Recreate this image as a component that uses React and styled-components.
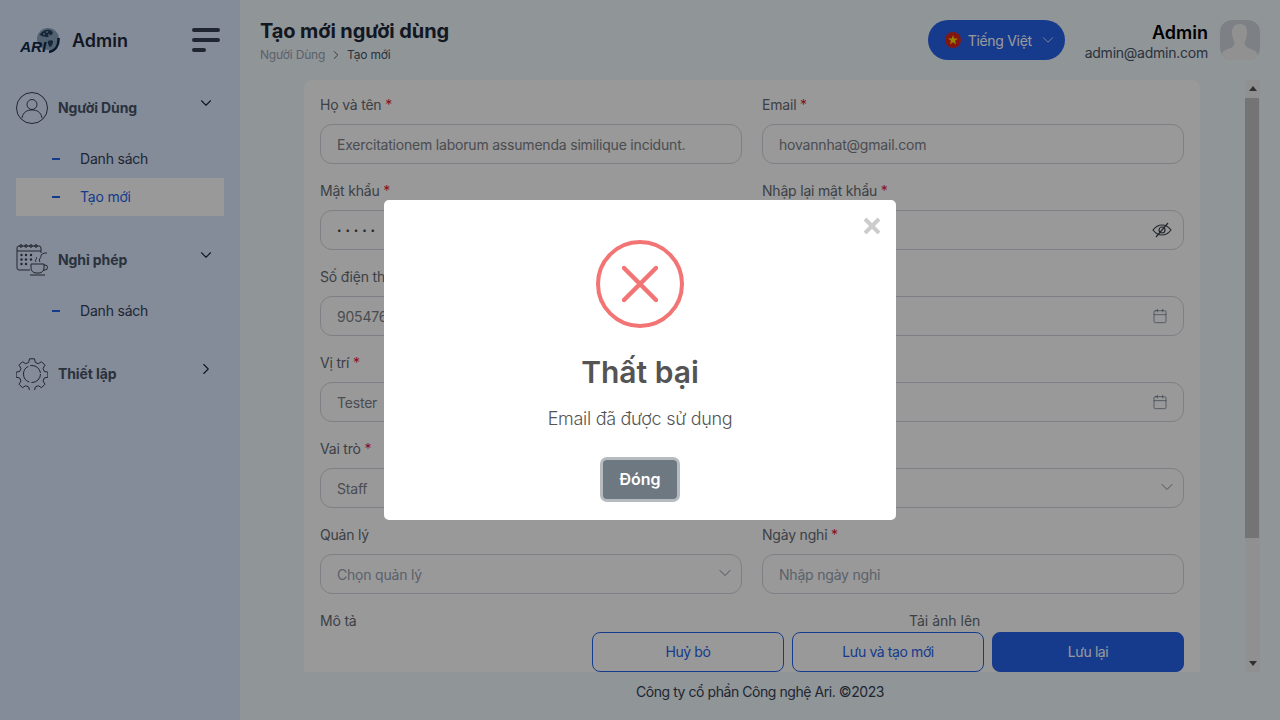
import { ChevronDown, ChevronRight, Calendar } from "lucide-react";
import styled, { createGlobalStyle } from "styled-components";

const rows = [
  [
    { label: "Họ và tên", required: true, value: "Exercitationem laborum assumenda similique incidunt." },
    { label: "Email", required: true, value: "hovannhat@gmail.com" },
  ],
  [
    { label: "Mật khẩu", required: true, value: "12345", type: "password" },
    { label: "Nhập lại mật khẩu", required: true, value: "12345", type: "password", icon: "eye" },
  ],
  [
    { label: "Số điện thoại", required: true, value: "905476123" },
    { label: "Ngày sinh", required: true, placeholder: "Chọn ngày", icon: "date" },
  ],
  [
    { label: "Vị trí", required: true, value: "Tester" },
    { label: "Ngày vào làm", required: true, placeholder: "Chọn ngày", icon: "date" },
  ],
  [
    { label: "Vai trò", required: true, value: "Staff" },
    { label: "Phòng ban", required: true, placeholder: "Chọn", icon: "select" },
  ],
  [
    { label: "Quản lý", placeholder: "Chọn quản lý", icon: "select" },
    { label: "Ngày nghỉ", required: true, placeholder: "Nhập ngày nghỉ" },
  ],
];

function Logo() {
  return (
    <svg width="40" height="28" viewBox="0 0 40 28">
      <circle cx="28" cy="13" r="11" fill="#8ba3bb" />
      <path d="M20 8c3-4 7-5 10-4s4 4 1 5-3 3-5 2-3 0-4-1-3 0-2-2z" fill="#24425f" />
      <path d="M28 15c3-1 5-1 5 1s-2 5-3 5-3-5-2-6z" fill="#24425f" />
      <g fill="#c4d4e0">
        <circle cx="24" cy="8" r="0.800" />
        <circle cx="27" cy="6" r="0.800" />
        <circle cx="29" cy="9" r="0.800" />
      </g>
      <path d="M29 26c6-1 10-6 9.500-14" fill="none" stroke="#10284a" strokeWidth="2.500" />
      <text x="0" y="26" fontFamily="Liberation Sans, sans-serif" fontSize="14" fontWeight="700" fontStyle="italic" fill="#10284a" textLength="26" lengthAdjust="spacingAndGlyphs">
        ARI
      </text>
    </svg>
  );
}

function UserIcon() {
  return (
    <svg width="32" height="32" viewBox="0 0 32 32" fill="none" stroke="#3a404c" strokeWidth="1">
      <circle cx="16" cy="16" r="15.500" />
      <circle cx="16" cy="12.500" r="5" />
      <path d="M6 26c1-6 5-8 10-8s9 2 10 8" />
    </svg>
  );
}

function LeaveIcon() {
  return (
    <svg width="32" height="32" viewBox="0 0 32 32" fill="none" stroke="#3a404c" strokeWidth="1">
      <path d="M14 26H3a2 2 0 0 1-2-2V4a2 2 0 0 1 2-2h20a2 2 0 0 1 2 2v5" />
      <path d="M1 7h24" />
      <circle cx="5" cy="2" r="1.300" />
      <circle cx="10" cy="2" r="1.300" />
      <circle cx="15" cy="2" r="1.300" />
      <circle cx="20" cy="2" r="1.300" />
      <g fill="#3a404c" stroke="none">
        <circle cx="5.500" cy="11" r="1.200" />
        <circle cx="10" cy="11" r="1.200" />
        <circle cx="15" cy="11" r="1.200" />
        <circle cx="5.500" cy="15.500" r="1.200" />
        <circle cx="10" cy="15.500" r="1.200" />
        <circle cx="15" cy="15.500" r="1.200" />
        <circle cx="5.500" cy="20" r="1.200" />
        <circle cx="10" cy="20" r="1.200" />
      </g>
      <path d="M15 20h13v4a5 5 0 0 1-5 5h-3a5 5 0 0 1-5-5z" />
      <path d="M28 21h1a2.500 2.500 0 0 1 0 5h-2" />
      <path d="M14 31h15" />
      <path d="M20 18c-2-2 2-3 0-5M24 18c-2-3 2-5 1-7 2-2 4-2 6-2" />
    </svg>
  );
}

function GearIcon() {
  return (
    <svg width="32" height="32" viewBox="0 0 32 32" fill="none" stroke="#3a404c" strokeWidth="1" strokeLinejoin="round">
      <path d="M13.500 0.800h5l0.800 3.600 3 1.300 3.200-2 3.500 3.500-2 3.200 1.300 3 3.600 0.800v5l-3.600 0.800-1.300 3 2 3.200-3.500 3.500-3.200-2-3 1.300-0.800 3.600h-5l-0.800-3.600-3-1.300-3.200 2-3.500-3.500 2-3.200-1.300-3-3.600-0.800v-5l3.600-0.800 1.300-3-2-3.200 3.500-3.500 3.200 2 3-1.300z" />
      <circle cx="16" cy="16" r="8.500" strokeDasharray="14 2 20 2" />
    </svg>
  );
}

function EyeSlash() {
  return (
    <svg width="20" height="16" viewBox="0 0 20 16" fill="none" stroke="#3a404c" strokeWidth="1.200">
      <path d="M1 8c2.500-3.300 5.500-5 9-5s6.500 1.700 9 5c-2.500 3.300-5.500 5-9 5s-6.500-1.700-9-5z" />
      <circle cx="10" cy="8" r="3" />
      <path d="M16 1L4 15" />
    </svg>
  );
}

function Flag() {
  return (
    <svg width="16" height="16" viewBox="0 0 16 16">
      <circle cx="8" cy="8" r="8" fill="#da251d" />
      <polygon points="8,3 9.200,6.500 13,6.500 10,8.800 11.100,12.400 8,10.200 4.900,12.400 6,8.800 3,6.500 6.800,6.500" fill="#ffdd00" />
    </svg>
  );
}

function Avatar() {
  return (
    <AvatarBox>
      <svg width="40" height="40" viewBox="0 0 40 40">
        <path d="M20 4c5 0 7 3 7 8 0 4-1 7-2 9-1 3 0 5 3 7 3 1 7 2 9 5 1 2 1 4 1 7H1c0-3 0-5 1-7 2-3 6-4 9-5 3-2 4-4 3-7-1-2-2-5-2-9 0-5 3-8 8-8z" fill="#f2f2f2" />
      </svg>
    </AvatarBox>
  );
}

function Field({ field }) {
  return (
    <FieldBox>
      <Label>
        {field.label}
        {field.required && <Star> *</Star>}
      </Label>
      <InputWrap>
        <Input type={field.type || "text"} readOnly value={field.value} placeholder={field.placeholder} $password={field.type === "password"} />
        {field.icon === "date" && (
          <DateIcon>
            <Calendar size={16} strokeWidth={1.1} color="#667085" />
          </DateIcon>
        )}
        {field.icon === "select" && (
          <SelectIcon>
            <ChevronDown size={20} strokeWidth={1} color="#667085" />
          </SelectIcon>
        )}
        {field.icon === "eye" && (
          <EyeIcon>
            <EyeSlash />
          </EyeIcon>
        )}
      </InputWrap>
    </FieldBox>
  );
}

export default function App() {
  return (
    <Page>
      <GlobalStyle />
      <Sidebar>
        <Brand>
          <BrandLeft>
            <Logo />
            <BrandName>Admin</BrandName>
          </BrandLeft>
          <Burger>
            <span />
            <span />
            <Short />
          </Burger>
        </Brand>
        <Nav>
          <NavGroup>
            <NavHead>
              <UserIcon />
              <NavTitle>Người Dùng</NavTitle>
              <NavArrow>
                <ChevronDown size={18} strokeWidth={1.500} />
              </NavArrow>
            </NavHead>
            <SubList>
              <SubItem>
                <Dash />
                <span>Danh sách</span>
              </SubItem>
              <SubItem $active>
                <Dash />
                <span>Tạo mới</span>
              </SubItem>
            </SubList>
          </NavGroup>
          <NavGroup>
            <NavHead>
              <LeaveIcon />
              <NavTitle>Nghỉ phép</NavTitle>
              <NavArrow>
                <ChevronDown size={18} strokeWidth={1.500} />
              </NavArrow>
            </NavHead>
            <SubList>
              <SubItem>
                <Dash />
                <span>Danh sách</span>
              </SubItem>
            </SubList>
          </NavGroup>
          <NavGroup>
            <NavHead>
              <GearIcon />
              <NavTitle>Thiết lập</NavTitle>
              <NavArrow>
                <ChevronRight size={18} strokeWidth={1.500} />
              </NavArrow>
            </NavHead>
          </NavGroup>
        </Nav>
      </Sidebar>
      <Main>
        <Header>
          <div>
            <Title>Tạo mới người dùng</Title>
            <Crumbs>
              <span>Người Dùng</span>
              <ChevronRight size={14} strokeWidth={1.500} color="#475467" />
              <CrumbNow>Tạo mới</CrumbNow>
            </Crumbs>
          </div>
          <HeaderRight>
            <LangButton>
              <Flag />
              <LangText>Tiếng Việt</LangText>
              <ChevronDown size={18} strokeWidth={1} />
            </LangButton>
            <UserBox>
              <UserText>
                <UserName>Admin</UserName>
                <UserMail>admin@admin.com</UserMail>
              </UserText>
              <Avatar />
            </UserBox>
          </HeaderRight>
        </Header>
        <Content>
          <Scroller>
            <Card>
              <FormGrid>
                {rows.flat().map((field) => (
                  <Field key={field.label} field={field} />
                ))}
                <div>
                  <Label>Mô tả</Label>
                </div>
                <div>
                  <UploadLabel>Tải ảnh lên</UploadLabel>
                </div>
              </FormGrid>
            </Card>
          </Scroller>
          <FakeScrollbar>
            <ScrollArrow>
              <svg width="8" height="5" viewBox="0 0 8 5">
                <polygon points="4,0 8,5 0,5" fill="#505050" />
              </svg>
            </ScrollArrow>
            <ScrollThumb />
            <ScrollArrow>
              <svg width="8" height="5" viewBox="0 0 8 5">
                <polygon points="0,0 8,0 4,5" fill="#505050" />
              </svg>
            </ScrollArrow>
          </FakeScrollbar>
          <Actions>
            <OutlineButton>Huỷ bỏ</OutlineButton>
            <OutlineButton>Lưu và tạo mới</OutlineButton>
            <SolidButton>Lưu lại</SolidButton>
          </Actions>
        </Content>
        <Footer>Công ty cổ phần Công nghệ Ari. ©2023</Footer>
      </Main>
      <Overlay>
        <Modal>
          <CloseX>
            <svg width="18" height="18" viewBox="0 0 18 18">
              <path d="M2 2l14 14M16 2L2 16" stroke="#cccccc" strokeWidth="4" />
            </svg>
          </CloseX>
          <ErrorCircle>
            <svg width="36" height="36" viewBox="0 0 36 36">
              <path d="M2 2l32 32M34 2L2 34" stroke="#f27474" strokeWidth="4.500" strokeLinecap="round" />
            </svg>
          </ErrorCircle>
          <ModalTitle>Thất bại</ModalTitle>
          <ModalText>Email đã được sử dụng</ModalText>
          <CloseButton>Đóng</CloseButton>
        </Modal>
      </Overlay>
    </Page>
  );
}

const GlobalStyle = createGlobalStyle`
  * {
    box-sizing: border-box;
  }

  body {
    margin: 0;
    font-family: "Inter", "Noto Sans", sans-serif;
    letter-spacing: -0.2px;
    overflow: hidden;
  }

  input, button {
    font-family: inherit;
    letter-spacing: inherit;
  }
`;

const Page = styled.div`
  width: 1280px;
  height: 720px;
  display: flex;
  background-color: #f1f8fd;
`;

const Sidebar = styled.aside`
  width: 240px;
  flex-shrink: 0;
  padding: 20px 16px 0;
  background-color: #dce8ff;
`;

const Brand = styled.div`
  height: 40px;
  display: flex;
  align-items: center;
  justify-content: space-between;
  padding-right: 4px;
`;

const BrandLeft = styled.div`
  display: flex;
  align-items: center;
  gap: 12px;
  padding-left: 4px;
`;

const BrandName = styled.span`
  font-size: 18px;
  font-weight: 600;
  letter-spacing: 0;
  color: #1d2939;
`;

const Burger = styled.div`
  width: 28px;
  display: flex;
  flex-direction: column;
  gap: 6px;

  span {
    height: 4px;
    border-radius: 2px;
    background-color: #344054;
  }
`;

const Short = styled.span`
  width: 14px;
`;

const Nav = styled.nav`
  margin-top: 32px;
  display: flex;
  flex-direction: column;
  gap: 28px;
`;

const NavGroup = styled.div`
  display: flex;
  flex-direction: column;
  gap: 16px;
`;

const NavHead = styled.div`
  height: 32px;
  display: flex;
  align-items: center;
  gap: 10px;
`;

const NavTitle = styled.span`
  flex: 1;
  margin-top: -2px;
  font-size: 14px;
  font-weight: 700;
  letter-spacing: -0.1px;
  color: #475467;
`;

const NavArrow = styled.span`
  display: flex;
  margin: -10px 9px 0 0;
  color: #1d2939;
`;

const SubList = styled.div`
  display: flex;
  flex-direction: column;
`;

const SubItem = styled.div`
  height: 38px;
  display: flex;
  align-items: center;
  gap: 20px;
  padding-left: 36px;
  font-size: 14px;
  color: ${(props) => (props.$active ? "#2563eb" : "#344054")};
  background-color: ${(props) => (props.$active ? "#ffffff" : "transparent")};

  span:last-child {
    margin-top: -2px;
  }
`;

const Dash = styled.span`
  width: 8px;
  height: 2px;
  background-color: #2563eb;
`;

const Main = styled.main`
  flex: 1;
  min-width: 0;
  display: flex;
  flex-direction: column;
`;

const Header = styled.header`
  height: 80px;
  flex-shrink: 0;
  display: flex;
  justify-content: space-between;
  padding: 19px 20px 0;
`;

const Title = styled.h1`
  margin: 0;
  font-size: 20px;
  line-height: 24px;
  font-weight: 700;
  letter-spacing: -0.1px;
  color: #1d2939;
`;

const Crumbs = styled.div`
  margin-top: 4px;
  display: flex;
  align-items: center;
  gap: 4px;
  font-size: 12px;
  color: #98a2b3;
`;

const CrumbNow = styled.span`
  color: #475467;
`;

const HeaderRight = styled.div`
  display: flex;
  gap: 20px;
  align-items: flex-start;
  padding-top: 1px;
`;

const LangButton = styled.button`
  width: 137px;
  height: 40px;
  display: flex;
  align-items: center;
  gap: 7px;
  padding: 0 0 0 17px;
  border: none;
  border-radius: 20px;
  font-size: 14px;
  color: #ffffff;
  background-color: #2563eb;
`;

const LangText = styled.span`
  width: 64px;
  white-space: nowrap;
  letter-spacing: -0.3px;
  text-align: left;
`;

const UserBox = styled.div`
  display: flex;
  gap: 12px;
`;

const UserText = styled.div`
  display: flex;
  flex-direction: column;
  align-items: flex-end;
  padding-top: 2px;
`;

const UserName = styled.span`
  font-size: 18px;
  line-height: 22px;
  font-weight: 600;
  letter-spacing: 0;
  color: #000000;
`;

const UserMail = styled.span`
  font-size: 14px;
  line-height: 18px;
  letter-spacing: -0.24px;
  color: #475467;
`;

const AvatarBox = styled.div`
  width: 40px;
  height: 40px;
  border-radius: 12px;
  overflow: hidden;
  background-color: #d0d8e0;
`;

const Content = styled.div`
  flex: 1;
  min-height: 0;
  position: relative;
  padding: 0 20px;
`;

const Scroller = styled.div`
  height: 100%;
  overflow: hidden;
  padding-right: 16px;
`;

const Card = styled.section`
  width: 896px;
  height: 757px;
  margin: 0 auto;
  padding: 16px;
  border-radius: 8px;
  background-color: #ffffff;
`;

const FormGrid = styled.div`
  display: grid;
  grid-template-columns: 1fr 1fr;
  column-gap: 20px;
  row-gap: 18px;
`;

const FieldBox = styled.div`
  display: flex;
  flex-direction: column;
  gap: 10px;
`;

const Label = styled.label`
  display: block;
  font-size: 14px;
  line-height: 18px;
  color: #666c75;
`;

const UploadLabel = styled(Label)`
  padding-left: 147px;
  letter-spacing: 0;
`;

const Star = styled.span`
  color: #e11d2e;
`;

const InputWrap = styled.div`
  position: relative;
`;

const Input = styled.input`
  width: 100%;
  height: 40px;
  padding: 0 16px;
  border: 1px solid #d0d5dd;
  border-radius: 12px;
  outline: none;
  font-size: ${(props) => (props.$password ? "8px" : "14px")};
  color: ${(props) => (props.$password ? "#40454e" : "#7c8087")};
  background-color: transparent;
  letter-spacing: ${(props) => (props.$password ? "3.900px" : "inherit")};

  &::placeholder {
    color: #98a2b3;
  }
`;

const DateIcon = styled.span`
  position: absolute;
  top: 12px;
  right: 16px;
  display: flex;
`;

const SelectIcon = styled.span`
  position: absolute;
  top: 9px;
  right: 7px;
  display: flex;
`;

const EyeIcon = styled.span`
  position: absolute;
  top: 12px;
  right: 12px;
  display: flex;
`;

const FakeScrollbar = styled.div`
  position: absolute;
  top: 0;
  right: 20px;
  bottom: 0;
  width: 15px;
  display: flex;
  flex-direction: column;
  background-color: #f1f1f1;
`;

const ScrollArrow = styled.div`
  height: 17px;
  display: flex;
  align-items: center;
  justify-content: center;
`;

const ScrollThumb = styled.div`
  height: 440px;
  margin-top: 1px;
  margin-right: 1px;
  margin-bottom: auto;
  background-color: #c1c1c1;
`;

const Actions = styled.div`
  position: absolute;
  right: 96px;
  bottom: 0;
  display: flex;
  gap: 8px;
`;

const OutlineButton = styled.button`
  width: 192px;
  height: 40px;
  padding: 0 0 2px;
  border: 1px solid #2563eb;
  border-radius: 8px;
  font-size: 14px;
  letter-spacing: -0.4px;
  color: #2563eb;
  background-color: #ffffff;
`;

const SolidButton = styled(OutlineButton)`
  color: #ffffff;
  background-color: #2563eb;
`;

const Footer = styled.footer`
  height: 48px;
  flex-shrink: 0;
  display: flex;
  align-items: center;
  justify-content: center;
  padding-bottom: 10px;
  font-size: 14px;
  letter-spacing: -0.44px;
  color: #344054;
`;

const Overlay = styled.div`
  position: fixed;
  inset: 0;
  display: flex;
  align-items: center;
  justify-content: center;
  background-color: rgba(0, 0, 0, 0.4);
`;

const Modal = styled.div`
  width: 512px;
  height: 320px;
  position: relative;
  display: flex;
  flex-direction: column;
  align-items: center;
  padding-top: 40px;
  border-radius: 5px;
  letter-spacing: 0;
  background-color: #ffffff;
`;

const CloseX = styled.span`
  position: absolute;
  top: 17px;
  right: 15px;
  display: flex;
`;

const ErrorCircle = styled.div`
  width: 88px;
  height: 88px;
  display: flex;
  align-items: center;
  justify-content: center;
  border: 4px solid #f27474;
  border-radius: 50%;
`;

const ModalTitle = styled.h2`
  margin: 22px 0 0;
  font-size: 30px;
  line-height: 44px;
  font-weight: 600;
  color: #545454;
`;

const ModalText = styled.p`
  margin: 12px 0 0;
  font-size: 18px;
  line-height: 26px;
  font-weight: 300;
  letter-spacing: -0.3px;
  color: #545454;
`;

const CloseButton = styled.button`
  margin-top: 28px;
  width: 74px;
  height: 39px;
  padding: 0 0 2px;
  border: none;
  border-radius: 4px;
  font-size: 16px;
  font-weight: 600;
  color: #ffffff;
  background-color: #6e7881;
  box-shadow: 0 0 0 3px rgba(110, 120, 129, 0.5);
`;
